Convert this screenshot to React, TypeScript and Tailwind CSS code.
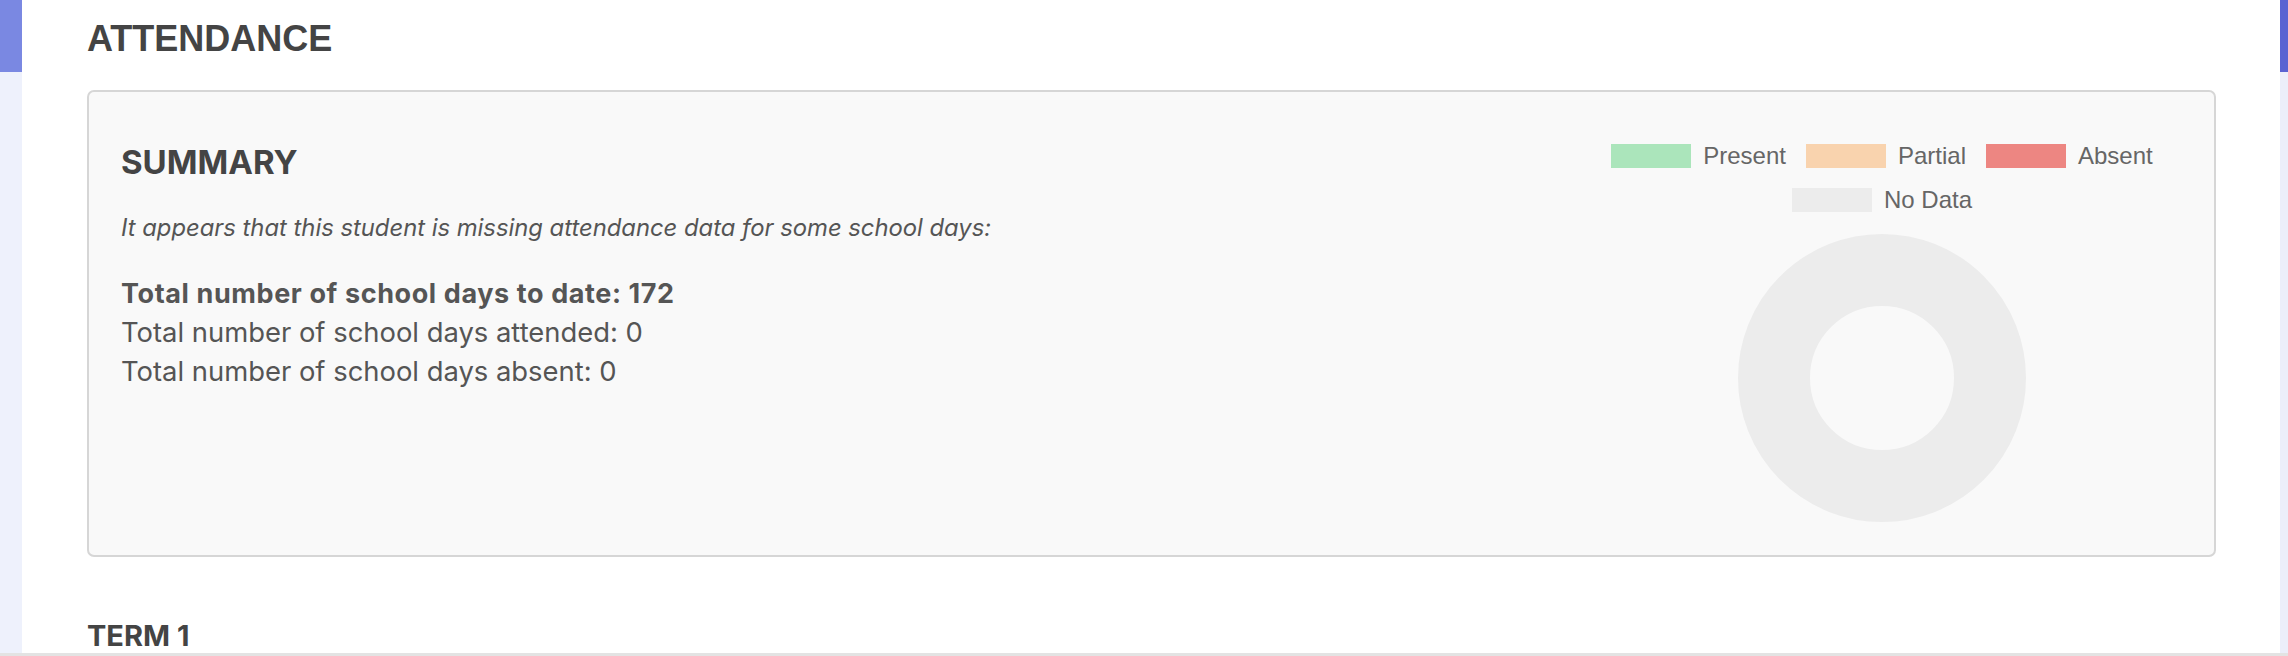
import React from "react";

const legendRows = [
  [
    { label: "Present", color: "bg-[#abe5bb]" },
    { label: "Partial", color: "bg-[#f9d3ae]" },
    { label: "Absent", color: "bg-[#ed8682]" },
  ],
  [{ label: "No Data", color: "bg-[#ececec]" }],
];

const LegendItem: React.FC<{ label: string; color: string }> = ({ label, color }) => (
  <div className="flex items-center gap-[12px]">
    <div className={`w-[80px] h-[24px] ${color}`} />
    <span className="text-[24px] leading-[24px] text-[#666]">{label}</span>
  </div>
);

const Donut: React.FC = () => (
  <svg width="288" height="288" viewBox="0 0 288 288">
    <circle cx="144" cy="144" r="108" fill="none" stroke="#ececec" strokeWidth="72" />
  </svg>
);

export default function App() {
  return (
    <div className="h-[656px] w-full flex flex-col overflow-hidden bg-white">
      <div className="flex flex-1 min-h-0">
        <div className="w-[22px] flex flex-col shadow-[inset_-4px_0_4px_-2px_rgba(0,0,0,0.08)]">
          <div className="h-[72px] bg-[#7a88e2]" />
          <div className="flex-1 bg-[#eef1fc]" />
        </div>

        <main className="flex-1 overflow-hidden bg-white pl-[65px] pr-[64px] pt-[19px] text-[#555] font-['Inter',sans-serif]">
          <h1 className="font-['Liberation_Sans',Arial,sans-serif] font-bold text-[36px] leading-[40px] text-[#444]">
            ATTENDANCE
          </h1>

          <section className="mt-[31px] flex justify-between rounded-[7px] border-2 border-[#d6d6d6] bg-[#f9f9f9] pt-[50px] pb-[33px] pl-[32px] pr-[32px]">
            <div className="flex flex-col">
              <h2 className="text-[33px] leading-[40px] font-bold text-[#444]">SUMMARY</h2>
              <p className="mt-[31px] text-[23.8px] leading-[30px] italic">
                It appears that this student is missing attendance data for some school days:
              </p>
              <div className="mt-[31px] text-[27.4px] leading-[39px]">
                <div className="font-bold text-[27px] tracking-[0.6px]">Total number of school days to date: 172</div>
                <div>Total number of school days attended: 0</div>
                <div>Total number of school days absent: 0</div>
              </div>
            </div>

            <div className="w-[600px] pt-[2px] flex flex-col items-center font-['Liberation_Sans',Arial,sans-serif]">
              <div className="flex flex-col items-center gap-[20px]">
                {legendRows.map((row, i) => (
                  <div key={i} className="flex gap-[20px]">
                    {row.map((item) => (
                      <LegendItem key={item.label} label={item.label} color={item.color} />
                    ))}
                  </div>
                ))}
              </div>
              <div className="mt-[22px]">
                <Donut />
              </div>
            </div>
          </section>

          <h3 className="mt-[61px] text-[29px] leading-[36px] font-bold text-[#444]">TERM 1</h3>
        </main>

        <div className="w-[8px] flex flex-col">
          <div className="h-[72px] bg-[#5b63d2]" />
          <div className="flex-1 bg-[#eceefa]" />
        </div>
      </div>
      <div className="h-[3px] bg-[#e3e3e3]" />
    </div>
  );
}
